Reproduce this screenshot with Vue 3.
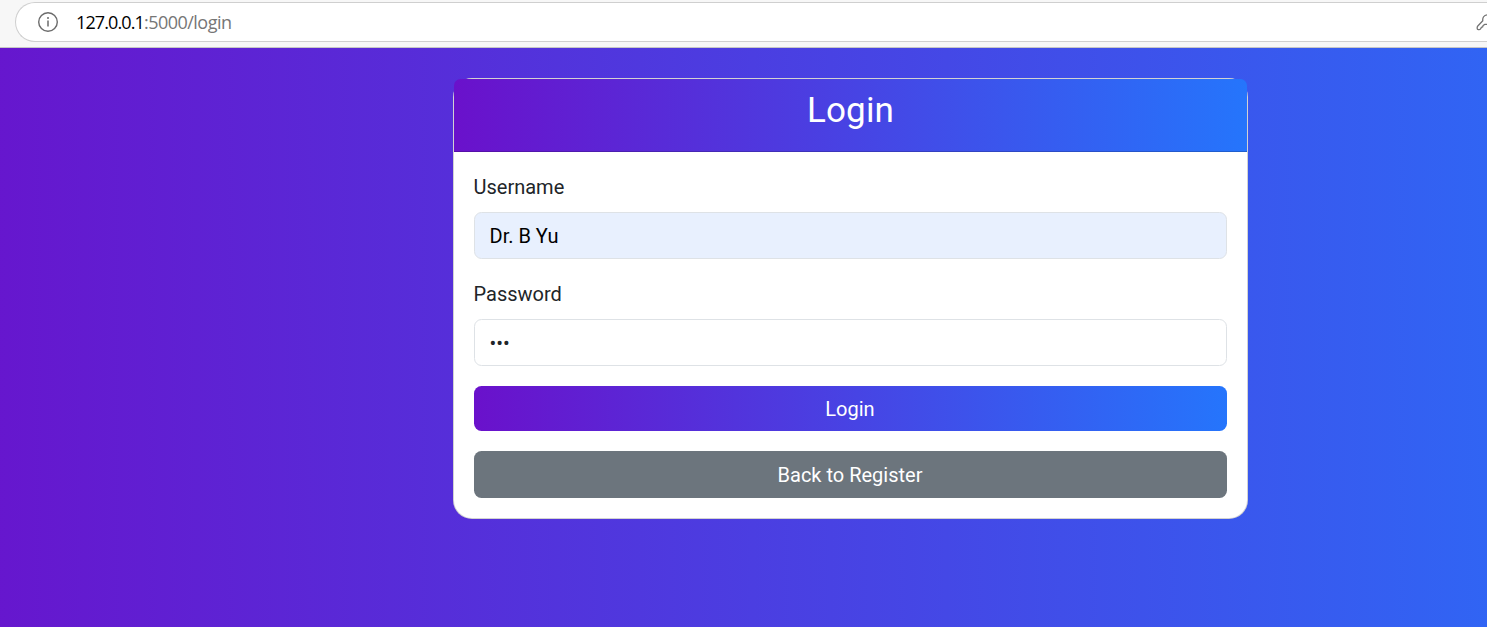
<script setup>
import { ref } from 'vue'

const username = ref('Dr. B Yu')
const password = ref('123')
</script>

<template>
  <div class="window">
    <header class="toolbar">
      <div class="address">
        <svg class="info" width="22" height="22" viewBox="0 0 22 22" fill="none" stroke="#6b6b6b">
          <circle cx="11" cy="11" r="9.3" stroke-width="1.4" />
          <path d="M11 9.6v6" stroke-width="1.5" />
          <circle cx="11" cy="7" r="1" fill="#6b6b6b" stroke="none" />
        </svg>
        <span class="url"><span class="host">127.0.0.1</span>:5000/login</span>
        <svg class="key" width="11" height="20" viewBox="0 0 11 20" fill="none" stroke="#737373" stroke-width="1.3">
          <path d="M11 2.8C8 3.2 6.3 5.6 6.8 8.8L1.8 14Q1.2 14.7 1.2 15.5V16.5Q1.2 17.6 2.3 17.6H3.3Q4.4 17.6 4.8 16.6L5.3 15.4L6.6 14.9L7.1 13.6L8.6 12.4H11" stroke-linejoin="round" />
        </svg>
      </div>
    </header>
    <main class="page">
      <section class="card">
        <div class="card-header"><h3>Login</h3></div>
        <form class="card-body" @submit.prevent>
          <label for="username">Username</label>
          <input id="username" v-model="username" class="filled" type="text" />
          <label for="password">Password</label>
          <input id="password" v-model="password" type="password" />
          <button class="primary" type="submit">Login</button>
          <button class="secondary" type="button">Back to Register</button>
        </form>
      </section>
    </main>
  </div>
</template>

<style>
body {
  margin: 0;
  overflow: hidden;
}
</style>

<style scoped>
.window {
  width: 1487px;
  height: 627px;
  overflow: hidden;
  display: flex;
  flex-direction: column;
  font-family: Roboto, "Liberation Sans", sans-serif;
}
.window * {
  box-sizing: border-box;
}
.toolbar {
  height: 48px;
  flex: none;
  padding: 2px 0 0 15px;
  background: #f7f7f7;
  border-bottom: 1px solid #c6c6c6;
}
.address {
  height: 40px;
  display: flex;
  align-items: center;
  padding-left: 20.5px;
  background: #fff;
  border: 1px solid #cfcfcf;
  border-right: 0;
  border-radius: 20px 0 0 20px;
}
.info {
  flex: none;
}
.url {
  margin: -1px 0 0 17.5px;
  font: 18px/24px "Open Sans", "Noto Sans", sans-serif;
  letter-spacing: -0.53px;
  color: #767676;
}
.host {
  letter-spacing: -0.88px;
  color: #000;
}
.key {
  margin-left: auto;
}
.page {
  flex: none;
  width: 1920px;
  height: 579px;
  margin-left: -110px;
  padding: 30px 0 0 563px;
  background: linear-gradient(to right, #6a11cb, #2575fc);
}
.card {
  width: 795px;
  height: 441px;
  background: #fff;
  border: 1px solid rgba(0, 0, 0, 0.175);
  border-radius: 19px;
}
.card-header {
  height: 73px;
  padding-top: 11px;
  background: linear-gradient(to right, #6a11cb, #2575fc);
  border-bottom: 1px solid rgba(0, 0, 0, 0.175);
  border-radius: 6.5px 6.5px 0 0;
}
h3 {
  margin: 0;
  font-size: 35px;
  font-weight: 400;
  letter-spacing: 0.15px;
  line-height: 42px;
  text-align: center;
  color: #fff;
}
.card-body {
  display: flex;
  flex-direction: column;
  padding: 20px;
}
label {
  height: 30px;
  margin: 0 0 10px -0.5px;
  font-size: 20px;
  line-height: 30px;
  color: #212529;
}
input {
  width: 100%;
  height: 47px;
  margin: 0 0 20px;
  padding: 7px 15px 7px 14.5px;
  font: 20px/30px Roboto, "Liberation Sans", sans-serif;
  color: #212529;
  background: #fff;
  border: 1px solid #dee2e6;
  border-radius: 7.5px;
  outline: none;
}
.filled {
  color: #000;
  background: #e8f0fe;
}
button {
  padding: 0 1px 0 0;
  font: 20px/30px Roboto, "Liberation Sans", sans-serif;
  color: #fff;
  border: 0;
  border-radius: 7.5px;
}
.primary {
  height: 45px;
  margin-bottom: 20px;
  background: linear-gradient(to right, #6a11cb, #2575fc);
}
.secondary {
  height: 47px;
  background: #6c757d;
}
</style>
